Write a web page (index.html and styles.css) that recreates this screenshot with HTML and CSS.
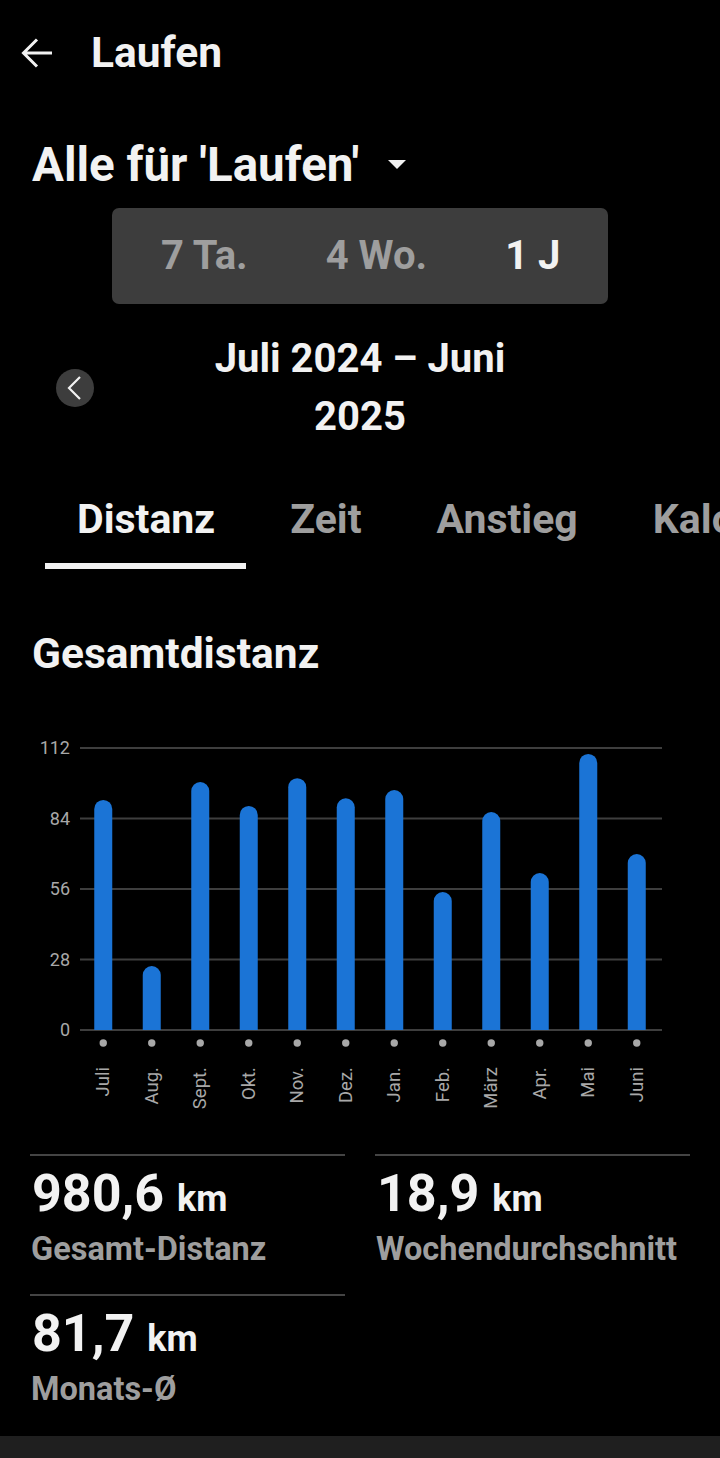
FILE: index.html
```html
<!DOCTYPE html>
<html lang="de">
<head>
<meta charset="utf-8">
<title>Laufen</title>
<link rel="stylesheet" href="styles.css">
</head>
<body>
<div class="page">
  <header class="appbar">
    <svg class="back" width="36" height="36" viewBox="0 0 36 36"><path d="M32 18H4M17 4.5L3.5 18L17 31.5" fill="none" stroke="#f2f2f2" stroke-width="3"/></svg>
    <h1 class="appbar-title">Laufen</h1>
  </header>

  <div class="filter">
    <span class="filter-text">Alle für 'Laufen'</span>
    <svg class="caret" width="18" height="10" viewBox="0 0 18 10"><polygon points="0,0 18,0 9,9" fill="#f2f2f2"/></svg>
  </div>

  <div class="segment">
    <span class="seg-item">7 Ta.</span>
    <span class="seg-item">4 Wo.</span>
    <span class="seg-item active">1 J</span>
  </div>

  <div class="range">
    <div class="range-side">
      <span class="nav-btn"><svg width="38" height="38" viewBox="0 0 38 38"><path d="M24 8L13 19L24 30" fill="none" stroke="#f2f2f2" stroke-width="2.2"/></svg></span>
    </div>
    <div class="range-text">Juli 2024 – Juni 2025</div>
    <div class="range-side"></div>
  </div>

  <nav class="tabs">
    <div class="tab active"><span class="tab-label">Distanz</span><span class="tab-ind"></span></div>
    <div class="tab"><span class="tab-label">Zeit</span><span class="tab-ind"></span></div>
    <div class="tab"><span class="tab-label">Anstieg</span><span class="tab-ind"></span></div>
    <div class="tab"><span class="tab-label">Kalorien</span><span class="tab-ind"></span></div>
  </nav>

  <h2 class="section-title">Gesamtdistanz</h2>

  <svg class="chart" width="720" height="400" viewBox="0 0 720 400">
    <g class="grid" stroke="#3e3e3e" stroke-width="2">
      <line x1="80" y1="28" x2="662" y2="28"/>
      <line x1="80" y1="98.5" x2="662" y2="98.5"/>
      <line x1="80" y1="169" x2="662" y2="169"/>
      <line x1="80" y1="239.5" x2="662" y2="239.5"/>
      <line x1="80" y1="310" x2="662" y2="310"/>
    </g>
    <g class="ylabels" font-family="Roboto, sans-serif" font-size="18" fill="#a8a8a8" text-anchor="end" dominant-baseline="central">
      <text x="70" y="27">112</text>
      <text x="70" y="98">84</text>
      <text x="70" y="168">56</text>
      <text x="70" y="239">28</text>
      <text x="70" y="309">0</text>
    </g>
    <g fill="#1b74d6">
      <path d="M94.25 310V88.9a9 9 0 0 1 18 0V310Z"/>
      <path d="M142.75 310V255.0a9 9 0 0 1 18 0V310Z"/>
      <path d="M191.25 310V71.0a9 9 0 0 1 18 0V310Z"/>
      <path d="M239.75 310V94.9a9 9 0 0 1 18 0V310Z"/>
      <path d="M288.25 310V67.2a9 9 0 0 1 18 0V310Z"/>
      <path d="M336.75 310V87.3a9 9 0 0 1 18 0V310Z"/>
      <path d="M385.25 310V79.0a9 9 0 0 1 18 0V310Z"/>
      <path d="M433.75 310V181.0a9 9 0 0 1 18 0V310Z"/>
      <path d="M482.25 310V101.0a9 9 0 0 1 18 0V310Z"/>
      <path d="M530.75 310V162.0a9 9 0 0 1 18 0V310Z"/>
      <path d="M579.25 310V42.9a9 9 0 0 1 18 0V310Z"/>
      <path d="M627.75 310V143.0a9 9 0 0 1 18 0V310Z"/>
    </g>
    <g fill="#a8a8a8">
      <circle cx="103.25" cy="323" r="3.7"/>
      <circle cx="151.75" cy="323" r="3.7"/>
      <circle cx="200.25" cy="323" r="3.7"/>
      <circle cx="248.75" cy="323" r="3.7"/>
      <circle cx="297.25" cy="323" r="3.7"/>
      <circle cx="345.75" cy="323" r="3.7"/>
      <circle cx="394.25" cy="323" r="3.7"/>
      <circle cx="442.75" cy="323" r="3.7"/>
      <circle cx="491.25" cy="323" r="3.7"/>
      <circle cx="539.75" cy="323" r="3.7"/>
      <circle cx="588.25" cy="323" r="3.7"/>
      <circle cx="636.75" cy="323" r="3.7"/>
    </g>
    <g class="xlabels" font-family="Roboto, sans-serif" font-size="18.5" fill="#a8a8a8" text-anchor="end" dominant-baseline="central">
      <text x="103.25" y="347" transform="rotate(-90 103.25 347)">Juli</text>
      <text x="151.75" y="347" transform="rotate(-90 151.75 347)">Aug.</text>
      <text x="200.25" y="347" transform="rotate(-90 200.25 347)">Sept.</text>
      <text x="248.75" y="347" transform="rotate(-90 248.75 347)">Okt.</text>
      <text x="297.25" y="347" transform="rotate(-90 297.25 347)">Nov.</text>
      <text x="345.75" y="347" transform="rotate(-90 345.75 347)">Dez.</text>
      <text x="394.25" y="347" transform="rotate(-90 394.25 347)">Jan.</text>
      <text x="442.75" y="347" transform="rotate(-90 442.75 347)">Feb.</text>
      <text x="491.25" y="347" transform="rotate(-90 491.25 347)">März</text>
      <text x="539.75" y="347" transform="rotate(-90 539.75 347)">Apr.</text>
      <text x="588.25" y="347" transform="rotate(-90 588.25 347)">Mai</text>
      <text x="636.75" y="347" transform="rotate(-90 636.75 347)">Juni</text>
    </g>
  </svg>

  <section class="stats">
    <div class="stat">
      <div class="stat-value">980,6 <span class="unit">km</span></div>
      <div class="stat-label">Gesamt-Distanz</div>
    </div>
    <div class="stat">
      <div class="stat-value">18,9 <span class="unit">km</span></div>
      <div class="stat-label">Wochendurchschnitt</div>
    </div>
    <div class="stat">
      <div class="stat-value">81,7 <span class="unit">km</span></div>
      <div class="stat-label">Monats-Ø</div>
    </div>
  </section>

  <footer class="bottombar"></footer>
</div>
</body>
</html>
```

FILE: styles.css
```css
* { box-sizing: border-box; }
html, body { margin: 0; padding: 0; background: #000; }
body {
  font-family: Roboto, "Noto Sans", sans-serif;
  color: #f2f2f2;
  width: 720px;
  overflow: hidden;
}
.page {
  display: flex;
  flex-direction: column;
  min-height: 1458px;
}
.appbar {
  height: 106px;
  display: flex;
  align-items: center;
  padding-left: 20px;
}
.back { display: block; }
.appbar-title {
  margin: 0 0 0 35px;
  font-size: 42.5px;
  font-weight: 700;
  line-height: 106px;
}
.filter {
  margin-top: 31px;
  padding-left: 32px;
  display: flex;
  align-items: center;
  height: 56px;
}
.filter-text {
  font-size: 47.5px;
  font-weight: 700;
  line-height: 56px;
}
.caret { margin-left: 29px; }
.segment {
  margin: 15px 0 0 112px;
  width: 496px;
  height: 96px;
  background: #3d3d3d;
  border-radius: 7px;
  display: flex;
  padding: 0 6px 0 10px;
}
.seg-item {
  padding: 0 39px;
  font-size: 40px;
  font-weight: 700;
  line-height: 96px;
  color: #9e9e9e;
}
.seg-item.active { color: #f2f2f2; }
.range {
  margin-top: 26px;
  display: grid;
  grid-template-columns: 1fr auto 1fr;
  align-items: center;
}
.range-side { padding-left: 56px; }
.nav-btn {
  width: 38px;
  height: 38px;
  border-radius: 50%;
  background: #3d3d3d;
  display: flex;
}
.range-text {
  width: 320px;
  text-align: center;
  font-size: 40px;
  font-weight: 700;
  line-height: 58px;
}
.tabs {
  margin-top: 43px;
  display: flex;
  padding-left: 40px;
  white-space: nowrap;
  overflow: hidden;
}
.tab {
  display: flex;
  flex-direction: column;
  flex: none;
}
.tab-label {
  padding: 0 38px 0 37px;
  font-size: 41px;
  font-weight: 700;
  line-height: 60px;
  color: #9e9e9e;
}
.tab-ind {
  margin: 14px 7px 0 5px;
  height: 6px;
}
.tab.active .tab-label { color: #f2f2f2; }
.tab.active .tab-ind { background: #f2f2f2; }
.section-title {
  margin: 61px 0 0 32px;
  font-size: 42.5px;
  font-weight: 700;
  line-height: 48px;
}
.chart {
  display: block;
  margin-top: 42px;
}
.stats {
  margin-top: 34px;
  padding: 0 30px;
  display: grid;
  grid-template-columns: 315px 315px;
  column-gap: 30px;
  row-gap: 25px;
}
.stat {
  border-top: 2px solid #444;
  padding-top: 8px;
}
.stat-value {
  font-size: 52px;
  font-weight: 700;
  line-height: 60px;
  padding-left: 2px;
}
.unit { font-size: 36px; }
.stat-label {
  font-size: 32.5px;
  font-weight: 700;
  line-height: 40px;
  color: #9e9e9e;
  padding-left: 1px;
  white-space: nowrap;
}
.bottombar {
  margin-top: auto;
  height: 22px;
  background: #1f1f1f;
}
```
